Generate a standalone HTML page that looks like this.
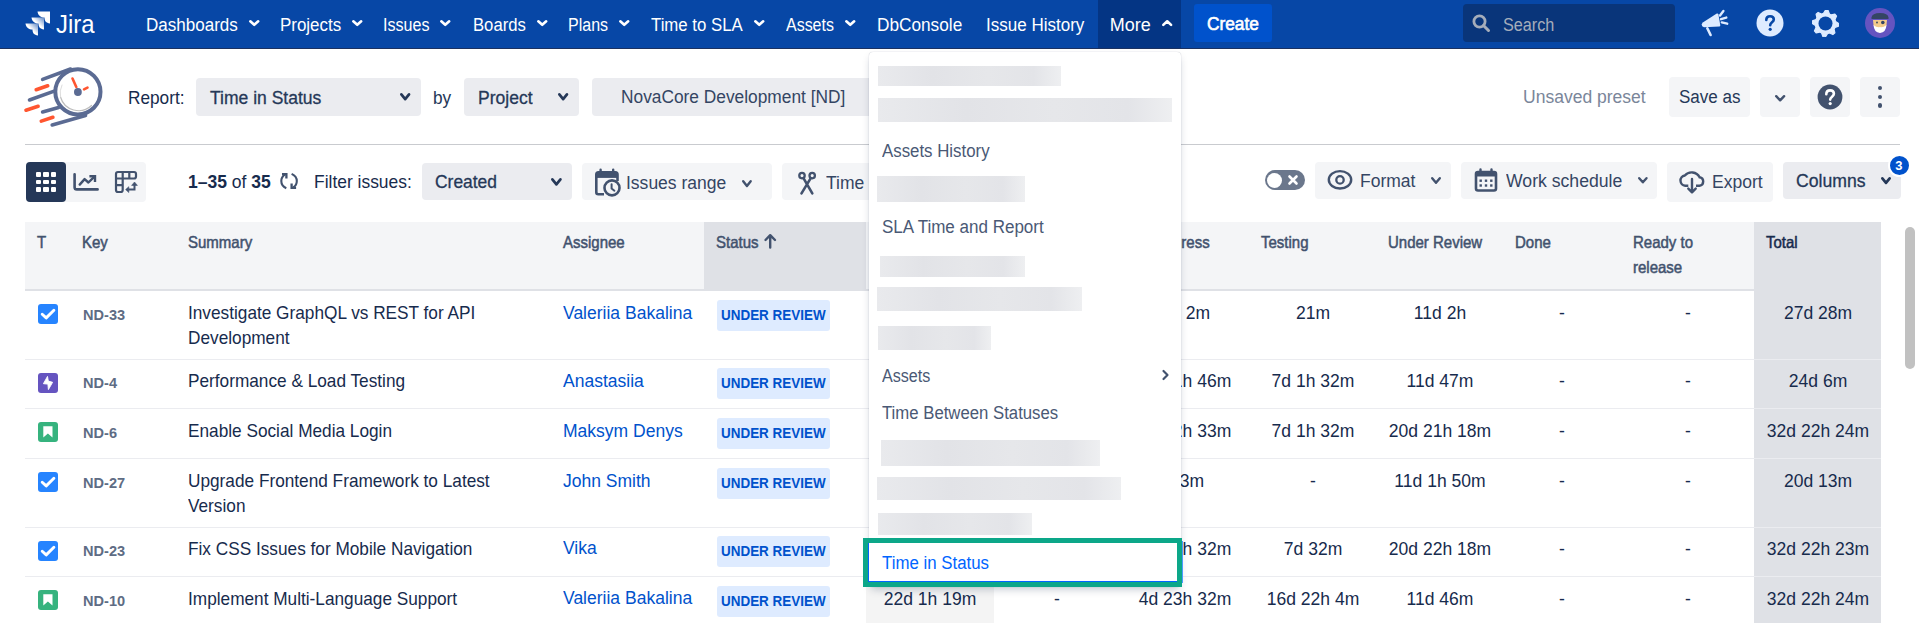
<!DOCTYPE html><html><head><meta charset="utf-8"><style>

*{margin:0;padding:0;box-sizing:border-box}
html,body{width:1919px;height:623px;overflow:hidden;background:#fff;font-family:"Liberation Sans", sans-serif;position:relative}
.t{position:absolute;white-space:nowrap}
.a{position:absolute}

</style></head><body>
<div class="a" style="left:0;top:0;width:1919px;height:49px;background:#0747A6;box-shadow:inset 0 -1px 0 #1B3160"></div>
<svg class="a" style="left:25px;top:11px" width="27" height="26" viewBox="0 0 27 26">
<defs><linearGradient id="jg" x1="1" y1="0" x2="0" y2="1"><stop offset="0" stop-color="#fff" stop-opacity="0.35"/><stop offset="0.5" stop-color="#fff"/></linearGradient></defs>
<path d="M12.5,0.5 H25 V12.5 C21,12 19.5,10 19.5,6.5 C16,6.5 13,4.5 12.5,0.5 Z" fill="#fff"/>
<path d="M6.5,6.5 H19 V18.5 C15,18 13.5,16 13.5,12.5 C10,12.5 7,10.5 6.5,6.5 Z" fill="url(#jg)"/>
<path d="M0.5,12.5 H13 V24.5 C9,24 7.5,22 7.5,18.5 C4,18.5 1,16.5 0.5,12.5 Z" fill="url(#jg)"/>
</svg>
<div class="t" style="left:55.5px;top:10.99px;font-size:26.5px;line-height:26.5px;color:#fff;font-weight:normal;transform:scaleX(0.9);transform-origin:0 0">Jira</div>
<div class="t" style="left:146px;top:16.05px;font-size:18.00px;line-height:18.00px;color:#fff;font-weight:normal;transform:scaleX(0.9460);transform-origin:0 0;">Dashboards</div>
<svg style="position:absolute;left:246px;top:16.7px" width="16.5" height="12.100000000000001" viewBox="0 0 16.5 12.100000000000001"><path d="M4.30,4.30 L8.25,7.80 L12.20,4.30" fill="none" stroke="#fff" stroke-width="2.6" stroke-linecap="round" stroke-linejoin="round"/></svg>
<div class="t" style="left:280.3px;top:16.05px;font-size:18.00px;line-height:18.00px;color:#fff;font-weight:normal;transform:scaleX(0.9410);transform-origin:0 0;">Projects</div>
<svg style="position:absolute;left:348.8px;top:16.7px" width="16.5" height="12.100000000000001" viewBox="0 0 16.5 12.100000000000001"><path d="M4.30,4.30 L8.25,7.80 L12.20,4.30" fill="none" stroke="#fff" stroke-width="2.6" stroke-linecap="round" stroke-linejoin="round"/></svg>
<div class="t" style="left:383px;top:16.05px;font-size:18.00px;line-height:18.00px;color:#fff;font-weight:normal;transform:scaleX(0.8940);transform-origin:0 0;">Issues</div>
<svg style="position:absolute;left:437.3px;top:16.7px" width="16.5" height="12.100000000000001" viewBox="0 0 16.5 12.100000000000001"><path d="M4.30,4.30 L8.25,7.80 L12.20,4.30" fill="none" stroke="#fff" stroke-width="2.6" stroke-linecap="round" stroke-linejoin="round"/></svg>
<div class="t" style="left:472.6px;top:16.05px;font-size:18.00px;line-height:18.00px;color:#fff;font-weight:normal;transform:scaleX(0.9260);transform-origin:0 0;">Boards</div>
<svg style="position:absolute;left:533.5px;top:16.7px" width="16.5" height="12.100000000000001" viewBox="0 0 16.5 12.100000000000001"><path d="M4.30,4.30 L8.25,7.80 L12.20,4.30" fill="none" stroke="#fff" stroke-width="2.6" stroke-linecap="round" stroke-linejoin="round"/></svg>
<div class="t" style="left:567.8px;top:16.05px;font-size:18.00px;line-height:18.00px;color:#fff;font-weight:normal;transform:scaleX(0.8890);transform-origin:0 0;">Plans</div>
<svg style="position:absolute;left:615.8px;top:16.7px" width="16.5" height="12.100000000000001" viewBox="0 0 16.5 12.100000000000001"><path d="M4.30,4.30 L8.25,7.80 L12.20,4.30" fill="none" stroke="#fff" stroke-width="2.6" stroke-linecap="round" stroke-linejoin="round"/></svg>
<div class="t" style="left:651px;top:16.05px;font-size:18.00px;line-height:18.00px;color:#fff;font-weight:normal;transform:scaleX(0.9330);transform-origin:0 0;">Time to SLA</div>
<svg style="position:absolute;left:751px;top:16.7px" width="16.5" height="12.100000000000001" viewBox="0 0 16.5 12.100000000000001"><path d="M4.30,4.30 L8.25,7.80 L12.20,4.30" fill="none" stroke="#fff" stroke-width="2.6" stroke-linecap="round" stroke-linejoin="round"/></svg>
<div class="t" style="left:786px;top:16.05px;font-size:18.00px;line-height:18.00px;color:#fff;font-weight:normal;transform:scaleX(0.8870);transform-origin:0 0;">Assets</div>
<svg style="position:absolute;left:842.3px;top:16.7px" width="16.5" height="12.100000000000001" viewBox="0 0 16.5 12.100000000000001"><path d="M4.30,4.30 L8.25,7.80 L12.20,4.30" fill="none" stroke="#fff" stroke-width="2.6" stroke-linecap="round" stroke-linejoin="round"/></svg>
<div class="t" style="left:877.3px;top:16.05px;font-size:18.00px;line-height:18.00px;color:#fff;font-weight:normal;transform:scaleX(0.9570);transform-origin:0 0;">DbConsole</div>
<div class="t" style="left:986px;top:16.05px;font-size:18.00px;line-height:18.00px;color:#fff;font-weight:normal;transform:scaleX(0.9450);transform-origin:0 0;">Issue History</div>
<div class="a" style="left:1098px;top:0;width:83px;height:48px;background:#043584"></div>
<div class="t" style="left:1109.8px;top:16.05px;font-size:18.00px;line-height:18.00px;color:#fff;font-weight:normal;transform:scaleX(1.0000);transform-origin:0 0;">More</div>
<svg style="position:absolute;left:1158.9px;top:16.8px" width="16.399999999999864" height="12.2" viewBox="0 0 16.399999999999864 12.2"><path d="M4.30,7.90 L8.20,4.30 L12.10,7.90" fill="none" stroke="#fff" stroke-width="2.6" stroke-linecap="round" stroke-linejoin="round"/></svg>
<div class="a" style="left:1194px;top:4px;width:78px;height:38px;background:#0052CC;border-radius:3px"></div>
<div class="t" style="left:1207.3px;top:15.25px;font-size:18.00px;line-height:18.00px;color:#fff;font-weight:normal;transform:scaleX(0.9600);transform-origin:0 0;-webkit-text-stroke:0.6px #fff">Create</div>
<div class="a" style="left:1463px;top:4px;width:212px;height:38px;background:#09357A;border-radius:4px"></div>
<svg class="a" style="left:1472px;top:14px" width="19" height="19" viewBox="0 0 19 19"><circle cx="7.5" cy="7.5" r="5.6" fill="none" stroke="#A5ADBA" stroke-width="2.8"/><path d="M11.5,11.5 L16.5,16.5" stroke="#A5ADBA" stroke-width="3" stroke-linecap="round"/></svg>
<div class="t" style="left:1502.5px;top:16.05px;font-size:18.00px;line-height:18.00px;color:#A5ADBA;font-weight:normal;transform:scaleX(0.9000);transform-origin:0 0;">Search</div>
<svg class="a" style="left:1695px;top:5px" width="40" height="36" viewBox="1695 5 40 36">
<path d="M1703.2,22.2 L1716.8,13.6 Q1718,13 1718.4,14.2 L1720.3,25.2 Q1720.4,26.4 1719.2,26.5 L1704,27.2 Q1701.6,27 1701.7,24.6 Q1702,23 1703.2,22.2 Z" fill="#DEEBFF"/>
<path d="M1707.3,28.3 L1710.6,35" stroke="#DEEBFF" stroke-width="2.6" stroke-linecap="round"/>
<path d="M1720,15.5 L1723.4,11 M1721,19.2 L1726.3,17.6 M1721.8,22.4 L1727.2,23.7" stroke="#DEEBFF" stroke-width="2.4" stroke-linecap="round"/>
</svg>
<svg class="a" style="left:1756px;top:9px" width="28" height="28" viewBox="0 0 28 28">
<circle cx="14" cy="14" r="13.5" fill="#DEEBFF"/>
<path d="M10.3,11 C10.3,8.6 12,7.2 14.1,7.2 C16.3,7.2 17.8,8.6 17.8,10.5 C17.8,13.2 14.2,13.4 14.2,16.2" fill="none" stroke="#0747A6" stroke-width="2.6" stroke-linecap="round"/>
<circle cx="14.2" cy="20.3" r="1.6" fill="#0747A6"/>
</svg>
<svg class="a" style="left:1811.5px;top:9.5px" width="27" height="27" viewBox="0 0 27 27">
<path d="M13.50,0.20 L16.09,0.46 L17.44,3.98 L19.22,4.94 L22.90,4.10 L24.56,6.11 L23.02,9.56 L23.60,11.49 L26.80,13.50 L26.54,16.09 L23.02,17.44 L22.06,19.22 L22.90,22.90 L20.89,24.56 L17.44,23.02 L15.51,23.60 L13.50,26.80 L10.91,26.54 L9.56,23.02 L7.78,22.06 L4.10,22.90 L2.44,20.89 L3.98,17.44 L3.40,15.51 L0.20,13.50 L0.46,10.91 L3.98,9.56 L4.94,7.78 L4.10,4.10 L6.11,2.44 L9.56,3.98 L11.49,3.40 Z" fill="#DEEBFF" stroke="#DEEBFF" stroke-width="1.2" stroke-linejoin="round"/>
<circle cx="13.5" cy="13.5" r="7.0" fill="#0747A6"/>
</svg>
<svg class="a" style="left:1865px;top:8px" width="30" height="30" viewBox="0 0 30 30">
<circle cx="15" cy="15" r="15" fill="#6554C0"/>
<path d="M8,12 Q8,22 15,24.5 Q22,22 22,12 Z" fill="#F3C98B"/>
<path d="M8.5,17 Q9,24.5 15,25 Q21,24.5 21.5,17 Q18,20 15,19 Q12,20 8.5,17 Z" fill="#fff"/>
<path d="M6.5,9.5 Q7,5 15,5 Q23,5 23.5,9.5 L23.5,11 L6.5,11 Z" fill="#344563"/>
<circle cx="17.8" cy="14.5" r="1.8" fill="#344563"/>
<circle cx="12" cy="14.5" r="0.9" fill="#344563"/>
</svg>
<svg class="a" style="left:20px;top:60px" width="90" height="72" viewBox="20 60 90 72">
<g stroke-linecap="round" fill="none">
<circle cx="77.9" cy="91.8" r="22.6" stroke="#5B6B93" stroke-width="4"/>
<path d="M60.5,97 A18.8,18.8 0 0 0 91.5,105.5" stroke="#BDBDBD" stroke-width="1.2"/>
<path d="M62,85 A18.8,18.8 0 0 0 60.5,97" stroke="#DDDDDD" stroke-width="1"/>
<path d="M42.6,79.4 L70.5,69 M29.5,100 L53.5,91.4 M42.6,112 L58.6,107.6 M52.2,125 L85.5,115.6" stroke="#5B6B93" stroke-width="3.6"/>
<path d="M36.2,89.7 L47.7,85.8 M26,110.2 L38.1,106.3 M41.3,121.1 L52.9,117.3" stroke="#FF5630" stroke-width="3.6"/>
<path d="M72.5,78.5 L76.3,87 M84,89.3 L87.5,87.6" stroke="#FF5630" stroke-width="2.6"/>
</g>
<circle cx="77.9" cy="92" r="3.9" fill="#5B6B93"/>
</svg>
<div class="t" style="left:127.50px;top:88.86px;font-size:17.99px;line-height:17.99px;color:#172B4D;font-weight:normal;transform:scaleX(0.958);transform-origin:0 0;">Report:</div>
<div class="a" style="left:196px;top:78px;width:225px;height:37.5px;background:#EBECF0;border-radius:4px"></div>
<div class="t" style="left:209.80px;top:88.60px;font-size:18.30px;line-height:18.30px;color:#253858;font-weight:normal;transform:scaleX(0.958);transform-origin:0 0;-webkit-text-stroke:0.3px #253858">Time in Status</div>
<svg style="position:absolute;left:397px;top:90.3px" width="16.399999999999977" height="13.5" viewBox="0 0 16.399999999999977 13.5"><path d="M4.35,4.35 L8.20,9.15 L12.05,4.35" fill="none" stroke="#253858" stroke-width="2.7" stroke-linecap="round" stroke-linejoin="round"/></svg>
<div class="t" style="left:433.00px;top:89.06px;font-size:17.99px;line-height:17.99px;color:#253858;font-weight:normal;transform:scaleX(0.958);transform-origin:0 0;">by</div>
<div class="a" style="left:464px;top:78px;width:115px;height:37.5px;background:#EBECF0;border-radius:4px"></div>
<div class="t" style="left:478.00px;top:88.60px;font-size:18.30px;line-height:18.30px;color:#253858;font-weight:normal;transform:scaleX(0.958);transform-origin:0 0;-webkit-text-stroke:0.3px #253858">Project</div>
<svg style="position:absolute;left:554.7px;top:90.3px" width="16.299999999999955" height="13.5" viewBox="0 0 16.299999999999955 13.5"><path d="M4.35,4.35 L8.15,9.15 L11.95,4.35" fill="none" stroke="#253858" stroke-width="2.7" stroke-linecap="round" stroke-linejoin="round"/></svg>
<div class="a" style="left:592px;top:78px;width:320px;height:37.5px;background:#EBECF0;border-radius:4px"></div>
<div class="t" style="left:621.00px;top:88.17px;font-size:18.09px;line-height:18.09px;color:#344563;font-weight:normal;transform:scaleX(0.958);transform-origin:0 0;">NovaCore Development [ND]</div>
<div class="t" style="left:1522.50px;top:88.30px;font-size:18.30px;line-height:18.30px;color:#7A869A;font-weight:normal;transform:scaleX(0.958);transform-origin:0 0;">Unsaved preset</div>
<div class="a" style="left:1669px;top:77px;width:81px;height:40px;background:#F4F5F7;border-radius:4px"></div>
<div class="t" style="left:1678.50px;top:88.74px;font-size:17.77px;line-height:17.77px;color:#253858;font-weight:normal;transform:scaleX(0.958);transform-origin:0 0;">Save as</div>
<div class="a" style="left:1760px;top:77px;width:40px;height:40px;background:#F4F5F7;border-radius:4px"></div>
<svg style="position:absolute;left:1771.7px;top:91.5px" width="16.299999999999955" height="12.5" viewBox="0 0 16.299999999999955 12.5"><path d="M4.20,4.20 L8.15,8.30 L12.10,4.20" fill="none" stroke="#42526E" stroke-width="2.4" stroke-linecap="round" stroke-linejoin="round"/></svg>
<div class="a" style="left:1810px;top:77px;width:40px;height:40px;background:#F4F5F7;border-radius:4px"></div>
<svg class="a" style="left:1817px;top:84px" width="26" height="26" viewBox="0 0 26 26">
<circle cx="13" cy="13" r="12.4" fill="#42526E"/>
<path d="M9.3,10.3 C9.3,7.8 11,6.4 13.1,6.4 C15.3,6.4 16.9,7.8 16.9,9.8 C16.9,12.6 13.2,12.8 13.2,15.6" fill="none" stroke="#fff" stroke-width="2.6" stroke-linecap="round"/>
<circle cx="13.2" cy="19.6" r="1.6" fill="#fff"/></svg>
<div class="a" style="left:1860px;top:77px;width:40px;height:40px;background:#F4F5F7;border-radius:4px"></div>
<div class="a" style="left:1877.6px;top:85.6px;width:4.8px;height:4.8px;border-radius:50%;background:#42526E"></div>
<div class="a" style="left:1877.6px;top:94.6px;width:4.8px;height:4.8px;border-radius:50%;background:#42526E"></div>
<div class="a" style="left:1877.6px;top:103.19999999999999px;width:4.8px;height:4.8px;border-radius:50%;background:#42526E"></div>
<div class="a" style="left:25px;top:144px;width:1875px;height:1px;background:#C9CBCF"></div>
<div class="a" style="left:26px;top:162px;width:120px;height:40px;background:#F4F5F7;border-radius:4px"></div>
<div class="a" style="left:26px;top:162px;width:40px;height:40px;background:#253858;border-radius:4px"></div>
<div class="a" style="left:35.9px;top:171.8px;width:5.2px;height:4.9px;background:#fff;border-radius:1px"></div>
<div class="a" style="left:35.9px;top:179.5px;width:5.2px;height:4.9px;background:#fff;border-radius:1px"></div>
<div class="a" style="left:35.9px;top:187.20000000000002px;width:5.2px;height:4.9px;background:#fff;border-radius:1px"></div>
<div class="a" style="left:43.449999999999996px;top:171.8px;width:5.2px;height:4.9px;background:#fff;border-radius:1px"></div>
<div class="a" style="left:43.449999999999996px;top:179.5px;width:5.2px;height:4.9px;background:#fff;border-radius:1px"></div>
<div class="a" style="left:43.449999999999996px;top:187.20000000000002px;width:5.2px;height:4.9px;background:#fff;border-radius:1px"></div>
<div class="a" style="left:51.0px;top:171.8px;width:5.2px;height:4.9px;background:#fff;border-radius:1px"></div>
<div class="a" style="left:51.0px;top:179.5px;width:5.2px;height:4.9px;background:#fff;border-radius:1px"></div>
<div class="a" style="left:51.0px;top:187.20000000000002px;width:5.2px;height:4.9px;background:#fff;border-radius:1px"></div>
<svg class="a" style="left:70px;top:170px" width="32" height="24" viewBox="70 170 32 24">
<path d="M74.6,174.3 V187.2 Q74.6,189.4 76.8,189.4 H97.6" fill="none" stroke="#42526E" stroke-width="2.6" stroke-linecap="round"/>
<path d="M79.7,184.6 L84.6,179.1 L88.4,182.5 L94.2,176.8" fill="none" stroke="#42526E" stroke-width="2.4" stroke-linecap="round" stroke-linejoin="round"/>
<path d="M89.4,176.3 H95 V182" fill="none" stroke="#42526E" stroke-width="2.4" stroke-linejoin="miter"/>
</svg>
<svg class="a" style="left:112px;top:168px" width="28" height="28" viewBox="112 168 28 28">
<path d="M118,172 H134 Q136,172 136,174 V176.5 Q136,178.5 134,178.5 H122.7 V190 Q122.7,192 120.7,192 H118 Q116,192 116,190 V174 Q116,172 118,172 Z M116,178.5 H122.7 M116,185.2 H122.7 M122.7,172 V178.5 M129.3,172 V178.5" fill="none" stroke="#42526E" stroke-width="2.2"/>
<path d="M134.5,184.5 V189.6 H128.3" fill="none" stroke="#42526E" stroke-width="2"/>
<path d="M131.6,185.4 L134.5,182 L137.4,185.4 Z M128.8,186.7 L125.6,189.6 L128.8,192.5 Z" fill="#42526E" stroke="#42526E" stroke-width="0.6" stroke-linejoin="round"/>
</svg>
<div class="t" style="left:187.50px;top:172.80px;font-size:18.30px;line-height:18.30px;color:#172B4D;font-weight:normal;transform:scaleX(0.958);transform-origin:0 0;"><b>1–35</b> of <b>35</b></div>
<svg class="a" style="left:276px;top:168px" width="26" height="26" viewBox="276 168 26 26">
<path d="M286.3,188.2 C282.8,186.6 281.3,183.8 281.3,181 C281.3,178.4 282.4,176.2 284.8,174.6" fill="none" stroke="#42526E" stroke-width="2.1"/>
<path d="M282,174.1 H286.4 V178.4" fill="none" stroke="#42526E" stroke-width="2.3" stroke-linejoin="miter"/>
<path d="M291.6,173.9 C295.2,175.5 296.8,178.3 296.8,181 C296.8,183.6 295.7,185.8 293.3,187.4" fill="none" stroke="#42526E" stroke-width="2.1"/>
<path d="M291.6,183.6 V187.9 H296.1" fill="none" stroke="#42526E" stroke-width="2.3" stroke-linejoin="miter"/>
</svg>
<div class="t" style="left:313.70px;top:172.89px;font-size:18.20px;line-height:18.20px;color:#172B4D;font-weight:normal;transform:scaleX(0.958);transform-origin:0 0;">Filter issues:</div>
<div class="a" style="left:422px;top:163px;width:150px;height:37px;background:#EBECF0;border-radius:4px"></div>
<div class="t" style="left:435.40px;top:172.89px;font-size:18.20px;line-height:18.20px;color:#253858;font-weight:normal;transform:scaleX(0.958);transform-origin:0 0;-webkit-text-stroke:0.3px #253858">Created</div>
<svg style="position:absolute;left:547.5px;top:175px" width="16.799999999999955" height="13.699999999999989" viewBox="0 0 16.799999999999955 13.699999999999989"><path d="M4.35,4.35 L8.40,9.35 L12.45,4.35" fill="none" stroke="#253858" stroke-width="2.7" stroke-linecap="round" stroke-linejoin="round"/></svg>
<div class="a" style="left:582px;top:163px;width:190px;height:37px;background:#F4F5F7;border-radius:4px"></div>
<svg class="a" style="left:592px;top:166px" width="32" height="32" viewBox="592 166 32 32">
<path d="M604,194.2 H598.3 Q596.3,194.2 596.3,192.2 V174.5 Q596.3,172.3 598.5,172.3 H615.3 Q617.5,172.3 617.5,174.5 V181" fill="none" stroke="#42526E" stroke-width="2.6"/>
<rect x="596.3" y="172.3" width="21.2" height="5.6" fill="#42526E"/>
<path d="M600.6,169.8 V173 M613.2,169.8 V173" stroke="#42526E" stroke-width="2.4" stroke-linecap="round"/>
<circle cx="612" cy="187.9" r="7.5" fill="#F4F5F7" stroke="#42526E" stroke-width="2.6"/>
<path d="M611.6,184.3 V188.5 L614.4,190.7" fill="none" stroke="#42526E" stroke-width="2" stroke-linecap="round" stroke-linejoin="round"/>
</svg>
<div class="t" style="left:626.20px;top:173.80px;font-size:18.30px;line-height:18.30px;color:#344563;font-weight:normal;transform:scaleX(0.958);transform-origin:0 0;">Issues range</div>
<svg style="position:absolute;left:739.3px;top:176.8px" width="15.900000000000091" height="13.199999999999989" viewBox="0 0 15.900000000000091 13.199999999999989"><path d="M4.20,4.20 L7.95,9.00 L11.70,4.20" fill="none" stroke="#42526E" stroke-width="2.4" stroke-linecap="round" stroke-linejoin="round"/></svg>
<div class="a" style="left:782px;top:163px;width:200px;height:37px;background:#F4F5F7;border-radius:4px"></div>
<svg class="a" style="left:795px;top:168px" width="24" height="28" viewBox="795 168 24 28">
<circle cx="802" cy="175.6" r="2.7" fill="none" stroke="#42526E" stroke-width="2.3"/>
<circle cx="812.2" cy="175.6" r="2.7" fill="none" stroke="#42526E" stroke-width="2.3"/>
<path d="M803.6,178.3 L812.3,193.4 M810.6,178.3 L801.5,193.4" stroke="#42526E" stroke-width="2.6" stroke-linecap="round"/>
</svg>
<div class="t" style="left:826.00px;top:173.80px;font-size:18.30px;line-height:18.30px;color:#344563;font-weight:normal;transform:scaleX(0.958);transform-origin:0 0;">Time</div>
<div class="a" style="left:1265px;top:170px;width:40px;height:20px;background:#6B778C;border-radius:10px"></div>
<div class="a" style="left:1266.8px;top:172.6px;width:15.2px;height:15.2px;background:#fff;border-radius:50%"></div>
<svg class="a" style="left:1287px;top:174px" width="12" height="12" viewBox="0 0 12 12"><path d="M2.5,2.5 L9.5,9.5 M9.5,2.5 L2.5,9.5" stroke="#fff" stroke-width="2.6" stroke-linecap="round"/></svg>
<div class="a" style="left:1315px;top:162px;width:136px;height:36.5px;background:#F4F5F7;border-radius:4px"></div>
<svg class="a" style="left:1326px;top:168px" width="28" height="24" viewBox="1326 168 28 24">
<ellipse cx="1340" cy="179.8" rx="11.2" ry="8.7" fill="none" stroke="#42526E" stroke-width="2.4"/>
<circle cx="1340" cy="179.9" r="3.7" fill="none" stroke="#42526E" stroke-width="2.3"/>
</svg>
<div class="t" style="left:1360.00px;top:171.80px;font-size:18.30px;line-height:18.30px;color:#344563;font-weight:normal;transform:scaleX(0.958);transform-origin:0 0;">Format</div>
<svg style="position:absolute;left:1428px;top:173.5px" width="16" height="13.0" viewBox="0 0 16 13.0"><path d="M4.20,4.20 L8.00,8.80 L11.80,4.20" fill="none" stroke="#42526E" stroke-width="2.4" stroke-linecap="round" stroke-linejoin="round"/></svg>
<div class="a" style="left:1461px;top:162px;width:196px;height:36.5px;background:#F4F5F7;border-radius:4px"></div>
<svg class="a" style="left:1472px;top:166px" width="28" height="28" viewBox="1472 166 28 28">
<rect x="1476" y="172" width="20" height="18.5" rx="2" fill="none" stroke="#42526E" stroke-width="2.6"/>
<rect x="1476" y="172" width="20" height="4.5" fill="#42526E"/>
<path d="M1480.5,169.5 V173 M1491.5,169.5 V173" stroke="#42526E" stroke-width="2.4" stroke-linecap="round"/>
<g fill="#42526E"><rect x="1479.5" y="179.5" width="2.4" height="2.4"/><rect x="1484.8" y="179.5" width="2.4" height="2.4"/><rect x="1490.1" y="179.5" width="2.4" height="2.4"/>
<rect x="1479.5" y="184.3" width="2.4" height="2.4"/><rect x="1484.8" y="184.3" width="2.4" height="2.4"/><rect x="1490.1" y="184.3" width="2.4" height="2.4"/></g>
</svg>
<div class="t" style="left:1505.50px;top:171.71px;font-size:18.41px;line-height:18.41px;color:#344563;font-weight:normal;transform:scaleX(0.958);transform-origin:0 0;">Work schedule</div>
<svg style="position:absolute;left:1634.5px;top:174.3px" width="15.700000000000045" height="12.5" viewBox="0 0 15.700000000000045 12.5"><path d="M4.20,4.20 L7.85,8.30 L11.50,4.20" fill="none" stroke="#42526E" stroke-width="2.4" stroke-linecap="round" stroke-linejoin="round"/></svg>
<div class="a" style="left:1667px;top:162px;width:106px;height:39.5px;background:#F4F5F7;border-radius:4px"></div>
<svg class="a" style="left:1676px;top:168px" width="32" height="28" viewBox="1676 168 32 28">
<path d="M1688.3,185.8 H1685.2 A5.2,5.2 0 0 1 1684.8,175.5 A9,9 0 0 1 1699.6,177.3 A4.3,4.3 0 0 1 1699.5,185.8 H1696" fill="none" stroke="#42526E" stroke-width="2.4" stroke-linecap="butt"/>
<path d="M1692,179 V192 M1688.3,188.6 L1692,192.3 L1695.7,188.6" fill="none" stroke="#42526E" stroke-width="2.4" stroke-linecap="round" stroke-linejoin="round"/>
</svg>
<div class="t" style="left:1711.50px;top:172.80px;font-size:18.30px;line-height:18.30px;color:#344563;font-weight:normal;transform:scaleX(0.958);transform-origin:0 0;">Export</div>
<div class="a" style="left:1783px;top:162px;width:118px;height:36.5px;background:#EBECF0;border-radius:4px"></div>
<div class="t" style="left:1795.80px;top:171.71px;font-size:18.41px;line-height:18.41px;color:#253858;font-weight:normal;transform:scaleX(0.958);transform-origin:0 0;-webkit-text-stroke:0.3px #253858">Columns</div>
<svg style="position:absolute;left:1877.5px;top:173.6px" width="16.0" height="13.200000000000017" viewBox="0 0 16.0 13.200000000000017"><path d="M4.35,4.35 L8.00,8.85 L11.65,4.35" fill="none" stroke="#253858" stroke-width="2.7" stroke-linecap="round" stroke-linejoin="round"/></svg>
<div class="a" style="left:1887.5px;top:153.5px;width:23px;height:23px;background:#0052CC;border:2px solid #fff;border-radius:50%"></div>
<div class="t" style="left:1895.3px;top:159.20px;font-size:13px;line-height:13px;color:#fff;font-weight:bold;">3</div>
<div class="a" style="left:25px;top:222px;width:1856px;height:67px;background:#F4F5F7"></div>
<div class="a" style="left:25px;top:289px;width:1856px;height:2px;background:#DFE1E6"></div>
<div class="a" style="left:704px;top:222px;width:162px;height:69px;background:#DFE1E6"></div>
<div class="a" style="left:1754px;top:222px;width:127px;height:401px;background:#DFE1E6"></div>
<div class="t" style="left:37.00px;top:234.50px;font-size:15.66px;line-height:15.66px;color:#42526E;font-weight:normal;transform:scaleX(0.958);transform-origin:0 0;-webkit-text-stroke:0.5px #42526E">T</div>
<div class="t" style="left:81.50px;top:234.50px;font-size:15.66px;line-height:15.66px;color:#42526E;font-weight:normal;transform:scaleX(0.958);transform-origin:0 0;-webkit-text-stroke:0.5px #42526E">Key</div>
<div class="t" style="left:187.70px;top:234.50px;font-size:15.66px;line-height:15.66px;color:#42526E;font-weight:normal;transform:scaleX(0.958);transform-origin:0 0;-webkit-text-stroke:0.5px #42526E">Summary</div>
<div class="t" style="left:563.00px;top:234.50px;font-size:15.66px;line-height:15.66px;color:#42526E;font-weight:normal;transform:scaleX(0.958);transform-origin:0 0;-webkit-text-stroke:0.5px #42526E">Assignee</div>
<div class="t" style="left:716.30px;top:234.50px;font-size:15.66px;line-height:15.66px;color:#42526E;font-weight:normal;transform:scaleX(0.958);transform-origin:0 0;-webkit-text-stroke:0.5px #42526E">Status</div>
<div class="t" style="left:1133.00px;top:234.50px;font-size:15.66px;line-height:15.66px;color:#42526E;font-weight:normal;transform:scaleX(0.958);transform-origin:0 0;-webkit-text-stroke:0.5px #42526E">In Progress</div>
<div class="t" style="left:1260.50px;top:234.50px;font-size:15.66px;line-height:15.66px;color:#42526E;font-weight:normal;transform:scaleX(0.958);transform-origin:0 0;-webkit-text-stroke:0.5px #42526E">Testing</div>
<div class="t" style="left:1387.80px;top:234.50px;font-size:15.66px;line-height:15.66px;color:#42526E;font-weight:normal;transform:scaleX(0.958);transform-origin:0 0;-webkit-text-stroke:0.5px #42526E">Under Review</div>
<div class="t" style="left:1515.40px;top:234.50px;font-size:15.66px;line-height:15.66px;color:#42526E;font-weight:normal;transform:scaleX(0.958);transform-origin:0 0;-webkit-text-stroke:0.5px #42526E">Done</div>
<div class="t" style="left:1633.30px;top:234.50px;font-size:15.66px;line-height:15.66px;color:#42526E;font-weight:normal;transform:scaleX(0.958);transform-origin:0 0;-webkit-text-stroke:0.5px #42526E">Ready to</div>
<div class="t" style="left:1633.30px;top:259.50px;font-size:15.66px;line-height:15.66px;color:#42526E;font-weight:normal;transform:scaleX(0.958);transform-origin:0 0;-webkit-text-stroke:0.5px #42526E">release</div>
<div class="t" style="left:1765.80px;top:234.50px;font-size:15.66px;line-height:15.66px;color:#172B4D;font-weight:normal;transform:scaleX(0.958);transform-origin:0 0;-webkit-text-stroke:0.5px #172B4D">Total</div>
<svg class="a" style="left:762px;top:233px" width="16" height="16" viewBox="762 233 16 16">
<path d="M770.2,247.5 V236 M765.5,240 L770.2,235.2 L775,240" fill="none" stroke="#42526E" stroke-width="2.4" stroke-linecap="round" stroke-linejoin="round"/></svg>
<div class="a" style="left:25px;top:359px;width:1729px;height:1px;background:#EBECF0"></div>
<div class="a" style="left:1754px;top:359px;width:127px;height:1px;background:#EBECF0"></div>
<svg class="a" style="left:38px;top:304px" width="20" height="20" viewBox="0 0 20 20"><rect width="20" height="20" rx="3" fill="#2684FF"/><path d="M4.2,10.2 L8.2,13.9 L15.9,6.2" fill="none" stroke="#fff" stroke-width="2.9" stroke-linecap="round" stroke-linejoin="round"/></svg>
<div class="t" style="left:82.6px;top:307.16px;font-size:15.10px;line-height:15.10px;color:#5E6C84;font-weight:bold;transform:scaleX(0.9650);transform-origin:0 0;">ND-33</div>
<div class="t" style="left:188.00px;top:304.06px;font-size:17.99px;line-height:17.99px;color:#172B4D;font-weight:normal;transform:scaleX(0.958);transform-origin:0 0;">Investigate GraphQL vs REST for API</div>
<div class="t" style="left:188.00px;top:329.06px;font-size:17.99px;line-height:17.99px;color:#172B4D;font-weight:normal;transform:scaleX(0.958);transform-origin:0 0;">Development</div>
<div class="t" style="left:563.30px;top:303.80px;font-size:18.30px;line-height:18.30px;color:#0052CC;font-weight:normal;transform:scaleX(0.958);transform-origin:0 0;">Valeriia Bakalina</div>
<div class="a" style="left:717px;top:300px;width:113px;height:31px;background:#DEEBFF;border-radius:3px"></div>
<div class="t" style="left:720.6px;top:307.13px;font-size:15.50px;line-height:15.50px;color:#0052CC;font-weight:bold;transform:scaleX(0.8680);transform-origin:0 0;">UNDER REVIEW</div>
<div class="t" style="left:830.0px;top:304.06px;width:200px;text-align:center;font-size:17.99px;line-height:17.99px;color:#172B4D;transform:scaleX(0.975)">22d 1h 19m</div>
<div class="t" style="left:957.0px;top:304.06px;width:200px;text-align:center;font-size:17.99px;line-height:17.99px;color:#172B4D;transform:scaleX(0.975)">-</div>
<div class="t" style="left:1098.0px;top:304.06px;width:200px;text-align:center;font-size:17.99px;line-height:17.99px;color:#172B4D;transform:scaleX(0.975)">2m</div>
<div class="t" style="left:1212.5px;top:304.06px;width:200px;text-align:center;font-size:17.99px;line-height:17.99px;color:#172B4D;transform:scaleX(0.975)">21m</div>
<div class="t" style="left:1340.3px;top:304.06px;width:200px;text-align:center;font-size:17.99px;line-height:17.99px;color:#172B4D;transform:scaleX(0.975)">11d 2h</div>
<div class="t" style="left:1462.0px;top:304.06px;width:200px;text-align:center;font-size:17.99px;line-height:17.99px;color:#172B4D;transform:scaleX(0.975)">-</div>
<div class="t" style="left:1587.7px;top:304.06px;width:200px;text-align:center;font-size:17.99px;line-height:17.99px;color:#172B4D;transform:scaleX(0.975)">-</div>
<div class="t" style="left:1717.5px;top:304.06px;width:200px;text-align:center;font-size:17.99px;line-height:17.99px;color:#172B4D;transform:scaleX(0.975)">27d 28m</div>
<div class="a" style="left:25px;top:408px;width:1729px;height:1px;background:#EBECF0"></div>
<div class="a" style="left:1754px;top:408px;width:127px;height:1px;background:#EBECF0"></div>
<svg class="a" style="left:38px;top:373px" width="20" height="20" viewBox="0 0 20 20"><rect width="20" height="20" rx="3" fill="#6554C0"/><path d="M9.5,3.4 L5.4,10.7 L9.9,11.1 L10.4,16.6 L14.6,9.3 L10.3,8.1 Z" fill="#fff" stroke="#fff" stroke-width="0.9" stroke-linejoin="round"/></svg>
<div class="t" style="left:82.6px;top:375.06px;font-size:15.10px;line-height:15.10px;color:#5E6C84;font-weight:bold;transform:scaleX(0.9650);transform-origin:0 0;">ND-4</div>
<div class="t" style="left:188.00px;top:371.96px;font-size:17.99px;line-height:17.99px;color:#172B4D;font-weight:normal;transform:scaleX(0.958);transform-origin:0 0;">Performance &amp; Load Testing</div>
<div class="t" style="left:563.30px;top:371.70px;font-size:18.30px;line-height:18.30px;color:#0052CC;font-weight:normal;transform:scaleX(0.958);transform-origin:0 0;">Anastasiia</div>
<div class="a" style="left:717px;top:367.9px;width:113px;height:31px;background:#DEEBFF;border-radius:3px"></div>
<div class="t" style="left:720.6px;top:375.03px;font-size:15.50px;line-height:15.50px;color:#0052CC;font-weight:bold;transform:scaleX(0.8680);transform-origin:0 0;">UNDER REVIEW</div>
<div class="t" style="left:830.0px;top:371.96px;width:200px;text-align:center;font-size:17.99px;line-height:17.99px;color:#172B4D;transform:scaleX(0.975)">22d 1h 19m</div>
<div class="t" style="left:957.0px;top:371.96px;width:200px;text-align:center;font-size:17.99px;line-height:17.99px;color:#172B4D;transform:scaleX(0.975)">-</div>
<div class="t" style="left:1085.0px;top:371.96px;width:200px;text-align:center;font-size:17.99px;line-height:17.99px;color:#172B4D;transform:scaleX(0.975)">4d 21h 46m</div>
<div class="t" style="left:1212.5px;top:371.96px;width:200px;text-align:center;font-size:17.99px;line-height:17.99px;color:#172B4D;transform:scaleX(0.975)">7d 1h 32m</div>
<div class="t" style="left:1340.3px;top:371.96px;width:200px;text-align:center;font-size:17.99px;line-height:17.99px;color:#172B4D;transform:scaleX(0.975)">11d 47m</div>
<div class="t" style="left:1462.0px;top:371.96px;width:200px;text-align:center;font-size:17.99px;line-height:17.99px;color:#172B4D;transform:scaleX(0.975)">-</div>
<div class="t" style="left:1587.7px;top:371.96px;width:200px;text-align:center;font-size:17.99px;line-height:17.99px;color:#172B4D;transform:scaleX(0.975)">-</div>
<div class="t" style="left:1717.5px;top:371.96px;width:200px;text-align:center;font-size:17.99px;line-height:17.99px;color:#172B4D;transform:scaleX(0.975)">24d 6m</div>
<div class="a" style="left:25px;top:458px;width:1729px;height:1px;background:#EBECF0"></div>
<div class="a" style="left:1754px;top:458px;width:127px;height:1px;background:#EBECF0"></div>
<svg class="a" style="left:38px;top:422px" width="20" height="20" viewBox="0 0 20 20"><rect width="20" height="20" rx="3" fill="#36B37E"/><path d="M5.3,4.2 H14.5 V15.6 L9.9,11.6 L5.3,15.6 Z" fill="#fff"/></svg>
<div class="t" style="left:82.6px;top:425.06px;font-size:15.10px;line-height:15.10px;color:#5E6C84;font-weight:bold;transform:scaleX(0.9650);transform-origin:0 0;">ND-6</div>
<div class="t" style="left:188.00px;top:421.96px;font-size:17.99px;line-height:17.99px;color:#172B4D;font-weight:normal;transform:scaleX(0.958);transform-origin:0 0;">Enable Social Media Login</div>
<div class="t" style="left:563.30px;top:421.70px;font-size:18.30px;line-height:18.30px;color:#0052CC;font-weight:normal;transform:scaleX(0.958);transform-origin:0 0;">Maksym Denys</div>
<div class="a" style="left:717px;top:417.9px;width:113px;height:31px;background:#DEEBFF;border-radius:3px"></div>
<div class="t" style="left:720.6px;top:425.03px;font-size:15.50px;line-height:15.50px;color:#0052CC;font-weight:bold;transform:scaleX(0.8680);transform-origin:0 0;">UNDER REVIEW</div>
<div class="t" style="left:830.0px;top:421.96px;width:200px;text-align:center;font-size:17.99px;line-height:17.99px;color:#172B4D;transform:scaleX(0.975)">22d 1h 19m</div>
<div class="t" style="left:957.0px;top:421.96px;width:200px;text-align:center;font-size:17.99px;line-height:17.99px;color:#172B4D;transform:scaleX(0.975)">-</div>
<div class="t" style="left:1085.0px;top:421.96px;width:200px;text-align:center;font-size:17.99px;line-height:17.99px;color:#172B4D;transform:scaleX(0.975)">4d 22h 33m</div>
<div class="t" style="left:1212.5px;top:421.96px;width:200px;text-align:center;font-size:17.99px;line-height:17.99px;color:#172B4D;transform:scaleX(0.975)">7d 1h 32m</div>
<div class="t" style="left:1340.3px;top:421.96px;width:200px;text-align:center;font-size:17.99px;line-height:17.99px;color:#172B4D;transform:scaleX(0.975)">20d 21h 18m</div>
<div class="t" style="left:1462.0px;top:421.96px;width:200px;text-align:center;font-size:17.99px;line-height:17.99px;color:#172B4D;transform:scaleX(0.975)">-</div>
<div class="t" style="left:1587.7px;top:421.96px;width:200px;text-align:center;font-size:17.99px;line-height:17.99px;color:#172B4D;transform:scaleX(0.975)">-</div>
<div class="t" style="left:1717.5px;top:421.96px;width:200px;text-align:center;font-size:17.99px;line-height:17.99px;color:#172B4D;transform:scaleX(0.975)">32d 22h 24m</div>
<div class="a" style="left:25px;top:527px;width:1729px;height:1px;background:#EBECF0"></div>
<div class="a" style="left:1754px;top:527px;width:127px;height:1px;background:#EBECF0"></div>
<svg class="a" style="left:38px;top:472px" width="20" height="20" viewBox="0 0 20 20"><rect width="20" height="20" rx="3" fill="#2684FF"/><path d="M4.2,10.2 L8.2,13.9 L15.9,6.2" fill="none" stroke="#fff" stroke-width="2.9" stroke-linecap="round" stroke-linejoin="round"/></svg>
<div class="t" style="left:82.6px;top:474.86px;font-size:15.10px;line-height:15.10px;color:#5E6C84;font-weight:bold;transform:scaleX(0.9650);transform-origin:0 0;">ND-27</div>
<div class="t" style="left:188.00px;top:471.76px;font-size:17.99px;line-height:17.99px;color:#172B4D;font-weight:normal;transform:scaleX(0.958);transform-origin:0 0;">Upgrade Frontend Framework to Latest</div>
<div class="t" style="left:188.00px;top:496.76px;font-size:17.99px;line-height:17.99px;color:#172B4D;font-weight:normal;transform:scaleX(0.958);transform-origin:0 0;">Version</div>
<div class="t" style="left:563.30px;top:471.50px;font-size:18.30px;line-height:18.30px;color:#0052CC;font-weight:normal;transform:scaleX(0.958);transform-origin:0 0;">John Smith</div>
<div class="a" style="left:717px;top:467.7px;width:113px;height:31px;background:#DEEBFF;border-radius:3px"></div>
<div class="t" style="left:720.6px;top:474.83px;font-size:15.50px;line-height:15.50px;color:#0052CC;font-weight:bold;transform:scaleX(0.8680);transform-origin:0 0;">UNDER REVIEW</div>
<div class="t" style="left:830.0px;top:471.76px;width:200px;text-align:center;font-size:17.99px;line-height:17.99px;color:#172B4D;transform:scaleX(0.975)">22d 1h 19m</div>
<div class="t" style="left:957.0px;top:471.76px;width:200px;text-align:center;font-size:17.99px;line-height:17.99px;color:#172B4D;transform:scaleX(0.975)">-</div>
<div class="t" style="left:1087.0px;top:471.76px;width:200px;text-align:center;font-size:17.99px;line-height:17.99px;color:#172B4D;transform:scaleX(0.975)">23m</div>
<div class="t" style="left:1212.5px;top:471.76px;width:200px;text-align:center;font-size:17.99px;line-height:17.99px;color:#172B4D;transform:scaleX(0.975)">-</div>
<div class="t" style="left:1340.3px;top:471.76px;width:200px;text-align:center;font-size:17.99px;line-height:17.99px;color:#172B4D;transform:scaleX(0.975)">11d 1h 50m</div>
<div class="t" style="left:1462.0px;top:471.76px;width:200px;text-align:center;font-size:17.99px;line-height:17.99px;color:#172B4D;transform:scaleX(0.975)">-</div>
<div class="t" style="left:1587.7px;top:471.76px;width:200px;text-align:center;font-size:17.99px;line-height:17.99px;color:#172B4D;transform:scaleX(0.975)">-</div>
<div class="t" style="left:1717.5px;top:471.76px;width:200px;text-align:center;font-size:17.99px;line-height:17.99px;color:#172B4D;transform:scaleX(0.975)">20d 13m</div>
<div class="a" style="left:25px;top:576px;width:1729px;height:1px;background:#EBECF0"></div>
<div class="a" style="left:1754px;top:576px;width:127px;height:1px;background:#EBECF0"></div>
<svg class="a" style="left:38px;top:541px" width="20" height="20" viewBox="0 0 20 20"><rect width="20" height="20" rx="3" fill="#2684FF"/><path d="M4.2,10.2 L8.2,13.9 L15.9,6.2" fill="none" stroke="#fff" stroke-width="2.9" stroke-linecap="round" stroke-linejoin="round"/></svg>
<div class="t" style="left:82.6px;top:542.76px;font-size:15.10px;line-height:15.10px;color:#5E6C84;font-weight:bold;transform:scaleX(0.9650);transform-origin:0 0;">ND-23</div>
<div class="t" style="left:188.00px;top:539.66px;font-size:17.99px;line-height:17.99px;color:#172B4D;font-weight:normal;transform:scaleX(0.958);transform-origin:0 0;">Fix CSS Issues for Mobile Navigation</div>
<div class="t" style="left:563.30px;top:539.40px;font-size:18.30px;line-height:18.30px;color:#0052CC;font-weight:normal;transform:scaleX(0.958);transform-origin:0 0;">Vika</div>
<div class="a" style="left:717px;top:535.6px;width:113px;height:31px;background:#DEEBFF;border-radius:3px"></div>
<div class="t" style="left:720.6px;top:542.73px;font-size:15.50px;line-height:15.50px;color:#0052CC;font-weight:bold;transform:scaleX(0.8680);transform-origin:0 0;">UNDER REVIEW</div>
<div class="t" style="left:830.0px;top:539.66px;width:200px;text-align:center;font-size:17.99px;line-height:17.99px;color:#172B4D;transform:scaleX(0.975)">22d 1h 19m</div>
<div class="t" style="left:957.0px;top:539.66px;width:200px;text-align:center;font-size:17.99px;line-height:17.99px;color:#172B4D;transform:scaleX(0.975)">-</div>
<div class="t" style="left:1085.0px;top:539.66px;width:200px;text-align:center;font-size:17.99px;line-height:17.99px;color:#172B4D;transform:scaleX(0.975)">4d 23h 32m</div>
<div class="t" style="left:1212.5px;top:539.66px;width:200px;text-align:center;font-size:17.99px;line-height:17.99px;color:#172B4D;transform:scaleX(0.975)">7d 32m</div>
<div class="t" style="left:1340.3px;top:539.66px;width:200px;text-align:center;font-size:17.99px;line-height:17.99px;color:#172B4D;transform:scaleX(0.975)">20d 22h 18m</div>
<div class="t" style="left:1462.0px;top:539.66px;width:200px;text-align:center;font-size:17.99px;line-height:17.99px;color:#172B4D;transform:scaleX(0.975)">-</div>
<div class="t" style="left:1587.7px;top:539.66px;width:200px;text-align:center;font-size:17.99px;line-height:17.99px;color:#172B4D;transform:scaleX(0.975)">-</div>
<div class="t" style="left:1717.5px;top:539.66px;width:200px;text-align:center;font-size:17.99px;line-height:17.99px;color:#172B4D;transform:scaleX(0.975)">32d 22h 23m</div>
<div class="a" style="left:866px;top:577px;width:128px;height:46px;background:#F4F4F4"></div>
<svg class="a" style="left:38px;top:590px" width="20" height="20" viewBox="0 0 20 20"><rect width="20" height="20" rx="3" fill="#36B37E"/><path d="M5.3,4.2 H14.5 V15.6 L9.9,11.6 L5.3,15.6 Z" fill="#fff"/></svg>
<div class="t" style="left:82.6px;top:592.76px;font-size:15.10px;line-height:15.10px;color:#5E6C84;font-weight:bold;transform:scaleX(0.9650);transform-origin:0 0;">ND-10</div>
<div class="t" style="left:188.00px;top:589.66px;font-size:17.99px;line-height:17.99px;color:#172B4D;font-weight:normal;transform:scaleX(0.958);transform-origin:0 0;">Implement Multi-Language Support</div>
<div class="t" style="left:563.30px;top:589.40px;font-size:18.30px;line-height:18.30px;color:#0052CC;font-weight:normal;transform:scaleX(0.958);transform-origin:0 0;">Valeriia Bakalina</div>
<div class="a" style="left:717px;top:585.6px;width:113px;height:31px;background:#DEEBFF;border-radius:3px"></div>
<div class="t" style="left:720.6px;top:592.73px;font-size:15.50px;line-height:15.50px;color:#0052CC;font-weight:bold;transform:scaleX(0.8680);transform-origin:0 0;">UNDER REVIEW</div>
<div class="t" style="left:830.0px;top:589.66px;width:200px;text-align:center;font-size:17.99px;line-height:17.99px;color:#172B4D;transform:scaleX(0.975)">22d 1h 19m</div>
<div class="t" style="left:957.0px;top:589.66px;width:200px;text-align:center;font-size:17.99px;line-height:17.99px;color:#172B4D;transform:scaleX(0.975)">-</div>
<div class="t" style="left:1085.0px;top:589.66px;width:200px;text-align:center;font-size:17.99px;line-height:17.99px;color:#172B4D;transform:scaleX(0.975)">4d 23h 32m</div>
<div class="t" style="left:1212.5px;top:589.66px;width:200px;text-align:center;font-size:17.99px;line-height:17.99px;color:#172B4D;transform:scaleX(0.975)">16d 22h 4m</div>
<div class="t" style="left:1340.3px;top:589.66px;width:200px;text-align:center;font-size:17.99px;line-height:17.99px;color:#172B4D;transform:scaleX(0.975)">11d 46m</div>
<div class="t" style="left:1462.0px;top:589.66px;width:200px;text-align:center;font-size:17.99px;line-height:17.99px;color:#172B4D;transform:scaleX(0.975)">-</div>
<div class="t" style="left:1587.7px;top:589.66px;width:200px;text-align:center;font-size:17.99px;line-height:17.99px;color:#172B4D;transform:scaleX(0.975)">-</div>
<div class="t" style="left:1717.5px;top:589.66px;width:200px;text-align:center;font-size:17.99px;line-height:17.99px;color:#172B4D;transform:scaleX(0.975)">32d 22h 24m</div>
<div class="a" style="left:1905px;top:227px;width:10px;height:141.5px;background:#C1C1C1;border-radius:5px"></div>
<div class="a" style="left:869px;top:52px;width:312px;height:535px;background:#fff;border-radius:4px;box-shadow:0 4px 8px -2px rgba(9,30,66,0.25),0 0 1px rgba(9,30,66,0.31)"></div>
<div class="a" style="left:878px;top:66px;width:183px;height:19.5px;background:linear-gradient(90deg,#E9EAED 0%,#E2E3E7 30%,#E6E7EA 60%,#E3E4E8 85%,#EEEFF1 100%)"></div>
<div class="a" style="left:878px;top:98px;width:294px;height:23.599999999999994px;background:linear-gradient(90deg,#E9EAED 0%,#E2E3E7 30%,#E6E7EA 60%,#E3E4E8 85%,#EEEFF1 100%)"></div>
<div class="a" style="left:877px;top:176px;width:148px;height:25.69999999999999px;background:linear-gradient(90deg,#E9EAED 0%,#E2E3E7 30%,#E6E7EA 60%,#E3E4E8 85%,#EEEFF1 100%)"></div>
<div class="a" style="left:880px;top:256px;width:145px;height:20.69999999999999px;background:linear-gradient(90deg,#E9EAED 0%,#E2E3E7 30%,#E6E7EA 60%,#E3E4E8 85%,#EEEFF1 100%)"></div>
<div class="a" style="left:877px;top:286.8px;width:205px;height:24.19999999999999px;background:linear-gradient(90deg,#E9EAED 0%,#E2E3E7 30%,#E6E7EA 60%,#E3E4E8 85%,#EEEFF1 100%)"></div>
<div class="a" style="left:878px;top:326px;width:113px;height:24px;background:linear-gradient(90deg,#E9EAED 0%,#E2E3E7 30%,#E6E7EA 60%,#E3E4E8 85%,#EEEFF1 100%)"></div>
<div class="a" style="left:881px;top:440.4px;width:219px;height:26.100000000000023px;background:linear-gradient(90deg,#E9EAED 0%,#E2E3E7 30%,#E6E7EA 60%,#E3E4E8 85%,#EEEFF1 100%)"></div>
<div class="a" style="left:877px;top:476.5px;width:244px;height:23.5px;background:linear-gradient(90deg,#E9EAED 0%,#E2E3E7 30%,#E6E7EA 60%,#E3E4E8 85%,#EEEFF1 100%)"></div>
<div class="a" style="left:878.3px;top:512.6px;width:153.4000000000001px;height:22.100000000000023px;background:linear-gradient(90deg,#E9EAED 0%,#E2E3E7 30%,#E6E7EA 60%,#E3E4E8 85%,#EEEFF1 100%)"></div>
<div class="t" style="left:882.4px;top:142.05px;font-size:18.00px;line-height:18.00px;color:#4A5975;font-weight:normal;transform:scaleX(0.9350);transform-origin:0 0;">Assets History</div>
<div class="t" style="left:882px;top:217.55px;font-size:18.00px;line-height:18.00px;color:#4A5975;font-weight:normal;transform:scaleX(0.9450);transform-origin:0 0;">SLA Time and Report</div>
<div class="t" style="left:882px;top:367.05px;font-size:18.00px;line-height:18.00px;color:#4A5975;font-weight:normal;transform:scaleX(0.8950);transform-origin:0 0;">Assets</div>
<div class="t" style="left:882px;top:404.05px;font-size:18.00px;line-height:18.00px;color:#4A5975;font-weight:normal;transform:scaleX(0.9300);transform-origin:0 0;">Time Between Statuses</div>
<svg class="a" style="left:1161px;top:369px" width="10" height="12" viewBox="0 0 10 12"><path d="M2.5,2 L6.5,6 L2.5,10" fill="none" stroke="#42526E" stroke-width="2.2" stroke-linecap="round" stroke-linejoin="round"/></svg>
<div class="a" style="left:863px;top:538px;width:319px;height:49px;border:5px solid #0CA789;background:#fff"></div>
<div class="a" style="left:868px;top:543px;width:1px;height:39px;background:#0065FF"></div>
<div class="a" style="left:868px;top:581px;width:309px;height:1px;background:#0065FF"></div>
<div class="a" style="left:1182px;top:541px;width:1px;height:42px;background:#4C9AFF"></div>
<div class="t" style="left:882.3px;top:554.05px;font-size:18.00px;line-height:18.00px;color:#0065FF;font-weight:normal;transform:scaleX(0.9350);transform-origin:0 0;">Time in Status</div>
</body></html>
